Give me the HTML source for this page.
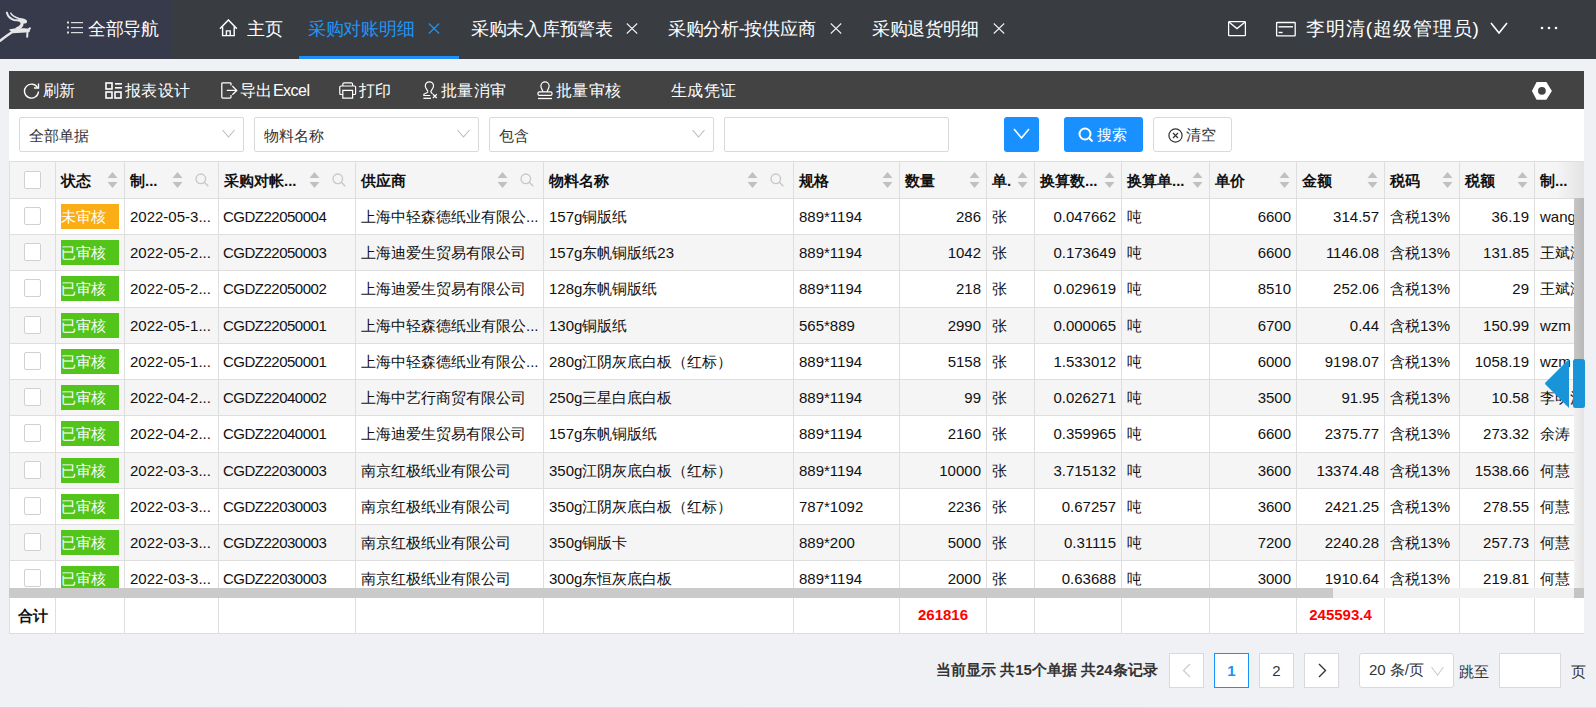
<!DOCTYPE html><html><head><meta charset="utf-8"><style>
*{box-sizing:border-box;margin:0;padding:0}
html,body{width:1596px;height:708px;overflow:hidden;background:#f0f1f5;font-family:"Liberation Sans",sans-serif;color:#111}
.abs{position:absolute}
#top{position:absolute;left:0;top:0;width:1596px;height:59px;background:#393d42}
#navl{position:absolute;left:0;top:0;width:172px;height:59px;background:#373a4b}
.tab{position:absolute;top:1px;height:59px;line-height:56px;font-size:18px;letter-spacing:-0.3px;color:#fff;white-space:nowrap}
.tbar{position:absolute;left:9px;top:71px;width:1575px;height:38px;background:#434343}
.tb{position:absolute;top:0;height:38px;line-height:39px;font-size:16px;letter-spacing:0.45px;color:#fff;white-space:nowrap}
.panel{position:absolute;left:9px;top:109px;width:1575px;height:525px;background:#fff}
.sel{position:absolute;top:117px;height:35px;border:1px solid #d9d9d9;border-radius:2px;background:#fff;font-size:15px;line-height:35px;padding-left:9px;color:#333}
.chev{position:absolute;right:8px;top:9px;width:13px;height:13px}
.btn{position:absolute;top:117px;height:35px;border-radius:3px;font-size:15px;line-height:35px;white-space:nowrap}
.cell{position:absolute;white-space:nowrap;overflow:hidden;font-size:15px;line-height:38px;padding:0 5px}
.hd{font-weight:bold;line-height:39px}
.vl{position:absolute;width:1px;background:#dedede}
.hl{position:absolute;height:1px;background:#dedede}
.badge{position:absolute;height:25px;width:58px;color:#fff;font-size:15px;line-height:25px;padding-left:0}
.cb{position:absolute;width:17px;height:18px;border:1px solid #d0d0d0;border-radius:2px;background:#fff}
.pg{position:absolute;top:653px;height:35px;border:1px solid #d9d9d9;background:#fff;font-size:15px;line-height:32px;text-align:center;color:#333}
</style></head><body>
<div id="top"></div><div id="navl"></div>
<svg class="abs" style="left:0;top:0" width="34" height="48" viewBox="0 0 34 48">
<g fill="none" stroke="#e6e6e8" stroke-linecap="round">
<path d="M6.8 12.6 C7.8 16.2 10.2 19 14 20 L19.5 20.6" stroke-width="2"/>
<path d="M10.8 13.2 C12.2 15.6 14.6 17.4 19 18.4" stroke-width="1.5"/>
<path d="M21.5 20.5 C23 24 22 27 17 28.8" stroke-width="3.2"/>
<path d="M28.5 30 L30 28.2 M27.5 31 L27.2 36.8" stroke-width="2"/>
<path d="M13 31.5 C9 34 5 37 0.5 40.5" stroke-width="2.6"/>
</g>
<ellipse cx="22.6" cy="20.8" rx="4.6" ry="2.3" fill="#e6e6e8" transform="rotate(18 22.6 20.8)"/>
<path d="M9 29.5 C13 28 22 28.2 26 28.4 C28 28.5 29.5 28.6 30 28.5 L29.6 32 C25 33.2 18 32.6 12.5 33.2 Z" fill="#e6e6e8"/>
</svg>
<svg class="abs" style="left:67px;top:21px" width="16" height="13" viewBox="0 0 16 13">
<rect x="0" y="0.5" width="2" height="2" fill="#ddd"/><rect x="0" y="5.5" width="2" height="2" fill="#ddd"/><rect x="0" y="10.5" width="2" height="2" fill="#ddd"/>
<rect x="4" y="1" width="12" height="1.2" fill="#ddd"/><rect x="4" y="6" width="12" height="1.2" fill="#ddd"/><rect x="4" y="11" width="12" height="1.2" fill="#ddd"/></svg>
<div class="tab" style="left:88px">全部导航</div>
<svg class="abs" style="left:219px;top:18px" width="19" height="19" viewBox="0 0 19 19">
<path d="M1.4 10.2 L9.4 1.9 L17.4 10.2" fill="none" stroke="#fff" stroke-width="1.5" stroke-linejoin="round" stroke-linecap="round"/><path d="M3.6 8.6 V17.6 H15.2 V8.6 M7.4 17.6 V12.9 H11.2 V17.6" fill="none" stroke="#fff" stroke-width="1.4"/></svg>
<div class="tab" style="left:247px">主页</div>
<div class="tab" style="left:308px;color:#2196f3">采购对账明细</div>
<svg class="abs" style="left:428px;top:23px" width="12" height="11" viewBox="0 0 12 11"><path d="M0.8 0.5 L11.2 10.5 M11.2 0.5 L0.8 10.5" stroke="#2196f3" stroke-width="1.1"/></svg>
<div class="abs" style="left:299px;top:56px;width:160px;height:3px;background:#1e8ffa"></div>
<div class="tab" style="left:471px">采购未入库预警表</div>
<svg class="abs" style="left:626px;top:23px" width="12" height="11" viewBox="0 0 12 11"><path d="M0.8 0.5 L11.2 10.5 M11.2 0.5 L0.8 10.5" stroke="#f0f0f0" stroke-width="1.05"/></svg>
<div class="tab" style="left:668px">采购分析-按供应商</div>
<svg class="abs" style="left:830px;top:23px" width="12" height="11" viewBox="0 0 12 11"><path d="M0.8 0.5 L11.2 10.5 M11.2 0.5 L0.8 10.5" stroke="#f0f0f0" stroke-width="1.05"/></svg>
<div class="tab" style="left:872px">采购退货明细</div>
<svg class="abs" style="left:993px;top:23px" width="12" height="11" viewBox="0 0 12 11"><path d="M0.8 0.5 L11.2 10.5 M11.2 0.5 L0.8 10.5" stroke="#f0f0f0" stroke-width="1.05"/></svg>
<svg class="abs" style="left:1227px;top:20px" width="20" height="17" viewBox="0 0 20 17">
<rect x="1.6" y="1.6" width="16.8" height="14" rx="0.6" fill="none" stroke="#fff" stroke-width="1.25"/><path d="M2.2 2.2 L10 8.6 L17.8 2.2" fill="none" stroke="#fff" stroke-width="1.25"/></svg>
<svg class="abs" style="left:1275px;top:21px" width="22" height="16" viewBox="0 0 22 16">
<rect x="1.6" y="1.5" width="18.6" height="13.4" rx="0.6" fill="none" stroke="#fff" stroke-width="1.3"/><rect x="3.6" y="5.1" width="14.4" height="1.4" fill="#fff"/><rect x="3.6" y="10.8" width="4" height="1.4" fill="#fff"/></svg>
<div class="tab" style="left:1306px;font-size:19px;letter-spacing:0.9px">李明清(超级管理员)</div>
<svg class="abs" style="left:1490px;top:22px" width="18" height="12" viewBox="0 0 18 12">
<path d="M1 1 L9 11 L17 1" fill="none" stroke="#fff" stroke-width="1.6"/></svg>
<svg class="abs" style="left:1540px;top:26px" width="18" height="4" viewBox="0 0 18 4">
<circle cx="2" cy="2" r="1.3" fill="#fff"/><circle cx="9" cy="2" r="1.3" fill="#fff"/><circle cx="16" cy="2" r="1.3" fill="#fff"/></svg>
<div class="tbar">
<svg class="abs" style="left:14px;top:11px" width="17" height="17" viewBox="0 0 17 17">
<path d="M14.5 5.5 A7 7 0 1 0 15.5 9.5" fill="none" stroke="#fff" stroke-width="1.4"/><path d="M15.5 1.5 V6 H11" fill="none" stroke="#fff" stroke-width="1.4"/></svg>
<div class="tb" style="left:34px">刷新</div>
<svg class="abs" style="left:96px;top:11px" width="17" height="17" viewBox="0 0 17 17">
<rect x="1" y="1" width="6" height="6" fill="none" stroke="#fff" stroke-width="1.6"/><rect x="1" y="10" width="6" height="6" fill="none" stroke="#fff" stroke-width="1.6"/><rect x="10" y="10" width="6" height="6" fill="none" stroke="#fff" stroke-width="1.6"/><rect x="10" y="1" width="7" height="1.6" fill="#fff"/><rect x="10" y="5" width="7" height="1.6" fill="#fff"/></svg>
<div class="tb" style="left:116px">报表设计</div>
<svg class="abs" style="left:212px;top:11px" width="17" height="17" viewBox="0 0 17 17">
<path d="M10 3.6 V1.8 Q10 0.8 9 0.8 H1.8 Q0.8 0.8 0.8 1.8 V15 Q0.8 16 1.8 16 H9 Q10 16 10 15 V13" fill="none" stroke="#fff" stroke-width="1.25"/><path d="M5.8 8.4 H15.6 M11.3 4 L15.8 8.4 L11.3 12.8" fill="none" stroke="#fff" stroke-width="1.25"/></svg>
<div class="tb" style="left:231px">导出<span style="letter-spacing:-0.5px">Excel</span></div>
<svg class="abs" style="left:330px;top:11px" width="18" height="17" viewBox="0 0 18 17">
<path d="M3.8 4 V2.2 Q3.8 0.8 5.2 0.8 H12.2 Q13.6 0.8 13.6 2.2 V4" fill="none" stroke="#fff" stroke-width="1.2"/><path d="M3.8 12.5 H1.8 Q0.8 12.5 0.8 11.5 V5 Q0.8 4 1.8 4 H15.6 Q16.6 4 16.6 5 V11.5 Q16.6 12.5 15.6 12.5 H13.6" fill="none" stroke="#fff" stroke-width="1.2"/><path d="M3.8 8.4 H13.6 V16.2 H3.8 Z" fill="none" stroke="#fff" stroke-width="1.2"/></svg>
<div class="tb" style="left:350px">打印</div>
<svg class="abs" style="left:407px;top:5px" width="30" height="28" viewBox="0 0 30 28">
<g fill="none" stroke="#fff" stroke-width="1.2">
<path d="M11.9 15.6 C11.6 13.6 9.3 12.6 9.3 9.9 A4.1 4.1 0 0 1 17.5 9.9 C17.5 12.6 15.2 13.6 14.9 15.6 C15.1 16.6 15.8 17.4 16.6 17.8"/>
<path d="M11.9 15.6 C11.4 17.3 9 17.4 7.9 18.2 V19.5 H14.2"/>
<path d="M7.4 22.3 H15" stroke-width="1.3"/>
<path d="M16.9 18.3 L20.8 22 M20.8 18.3 L16.9 22"/>
</g></svg>
<div class="tb" style="left:432px">批量消审</div>
<svg class="abs" style="left:522px;top:5px" width="30" height="28" viewBox="0 0 30 28">
<g fill="none" stroke="#fff" stroke-width="1.2">
<path d="M11.8 15.8 C11.8 14 9.9 12.5 9.9 10 A4.1 4.1 0 0 1 18.1 10 C18.1 12.5 16.2 14 16.2 15.8"/>
<rect x="7" y="15.8" width="14" height="3.6" rx="1.3"/>
<path d="M7 22.5 H21" stroke-width="1.3"/>
</g></svg>
<div class="tb" style="left:547px">批量审核</div>
<div class="tb" style="left:662px">生成凭证</div>
<svg class="abs" style="left:1522px;top:10px" width="22" height="20" viewBox="0 0 22 20">
<path d="M5.6 1 H15.4 L20.9 9.9 L15.4 18.8 H5.6 L0.9 9.9 Z" fill="#fff"/><circle cx="10.9" cy="9.8" r="3.9" fill="#434343"/></svg>
</div>
<div class="panel"></div>
<div class="sel" style="left:19px;width:225px">全部单据<svg class="chev" viewBox="0 0 13 13"><path d="M0.5 3 L6.5 10 L12.5 3" fill="none" stroke="#bbb" stroke-width="1.1"/></svg></div>
<div class="sel" style="left:254px;width:225px">物料名称<svg class="chev" viewBox="0 0 13 13"><path d="M0.5 3 L6.5 10 L12.5 3" fill="none" stroke="#bbb" stroke-width="1.1"/></svg></div>
<div class="sel" style="left:489px;width:225px">包含<svg class="chev" viewBox="0 0 13 13"><path d="M0.5 3 L6.5 10 L12.5 3" fill="none" stroke="#bbb" stroke-width="1.1"/></svg></div>
<div class="sel" style="left:724px;width:225px"></div>
<div class="btn" style="left:1004px;width:35px;background:#1890ff"><svg class="abs" style="left:9px;top:11px" width="17" height="12" viewBox="0 0 17 12"><path d="M1 1 L8.5 10 L16 1" fill="none" stroke="#fff" stroke-width="1.6"/></svg></div>
<div class="btn" style="left:1064px;width:79px;background:#1890ff;color:#fff"><svg class="abs" style="left:14px;top:10px" width="16" height="16" viewBox="0 0 16 16"><circle cx="7" cy="7" r="5.5" fill="none" stroke="#fff" stroke-width="2"/><path d="M11 11 L14.5 14.5" stroke="#fff" stroke-width="2"/></svg><span class="abs" style="left:33px">搜索</span></div>
<div class="btn" style="left:1153px;width:79px;background:#fff;border:1px solid #d9d9d9;color:#333;line-height:33px"><svg class="abs" style="left:14px;top:10px" width="15" height="15" viewBox="0 0 15 15"><circle cx="7.5" cy="7.5" r="6.6" fill="none" stroke="#333" stroke-width="1.2"/><path d="M5 5 L10 10 M10 5 L5 10" stroke="#333" stroke-width="1.2"/></svg><span class="abs" style="left:32px">清空</span></div>
<div class="abs" style="left:9px;top:161px;width:1575px;height:37px;background:#f5f5f5"></div>
<div class="abs" style="left:9px;top:198px;width:1565px;height:36px;background:#fff"></div>
<div class="abs" style="left:9px;top:234px;width:1565px;height:36px;background:#f5f5f5"></div>
<div class="abs" style="left:9px;top:270px;width:1565px;height:37px;background:#fff"></div>
<div class="abs" style="left:9px;top:307px;width:1565px;height:36px;background:#f5f5f5"></div>
<div class="abs" style="left:9px;top:343px;width:1565px;height:36px;background:#fff"></div>
<div class="abs" style="left:9px;top:379px;width:1565px;height:36px;background:#f5f5f5"></div>
<div class="abs" style="left:9px;top:415px;width:1565px;height:37px;background:#fff"></div>
<div class="abs" style="left:9px;top:452px;width:1565px;height:36px;background:#f5f5f5"></div>
<div class="abs" style="left:9px;top:488px;width:1565px;height:36px;background:#fff"></div>
<div class="abs" style="left:9px;top:524px;width:1565px;height:36px;background:#f5f5f5"></div>
<div class="abs" style="left:9px;top:560px;width:1565px;height:28px;background:#fff"></div>
<div class="abs" style="left:0;top:198px;width:1574px;height:390px;overflow:hidden">
<div class="cb" style="left:24px;top:9px"></div>
<div class="badge" style="left:61px;top:6px;background:#faad14">未审核</div>
<div class="cell" style="left:125px;top:0.00px;width:93px;">2022-05-3...</div>
<div class="cell" style="left:219px;top:0.00px;width:136px;letter-spacing:-0.5px;padding-left:4px;">CGDZ22050004</div>
<div class="cell" style="left:356px;top:0.00px;width:187px;">上海中轻森德纸业有限公...</div>
<div class="cell" style="left:544px;top:0.00px;width:249px;">157g铜版纸</div>
<div class="cell" style="left:794px;top:0.00px;width:105px;">889*1194</div>
<div class="cell" style="left:900px;top:0.00px;width:86px;text-align:right;">286</div>
<div class="cell" style="left:987px;top:0.00px;width:47px;">张</div>
<div class="cell" style="left:1035px;top:0.00px;width:86px;text-align:right;">0.047662</div>
<div class="cell" style="left:1122px;top:0.00px;width:87px;">吨</div>
<div class="cell" style="left:1210px;top:0.00px;width:86px;text-align:right;">6600</div>
<div class="cell" style="left:1297px;top:0.00px;width:87px;text-align:right;">314.57</div>
<div class="cell" style="left:1385px;top:0.00px;width:74px;">含税13%</div>
<div class="cell" style="left:1460px;top:0.00px;width:74px;text-align:right;">36.19</div>
<div class="cell" style="left:1535px;top:0.00px;width:165px;">wang</div>
<div class="cb" style="left:24px;top:45px"></div>
<div class="badge" style="left:61px;top:42px;background:#52c41a">已审核</div>
<div class="cell" style="left:125px;top:36.00px;width:93px;">2022-05-2...</div>
<div class="cell" style="left:219px;top:36.00px;width:136px;letter-spacing:-0.5px;padding-left:4px;">CGDZ22050003</div>
<div class="cell" style="left:356px;top:36.00px;width:187px;">上海迪爱生贸易有限公司</div>
<div class="cell" style="left:544px;top:36.00px;width:249px;">157g东帆铜版纸23</div>
<div class="cell" style="left:794px;top:36.00px;width:105px;">889*1194</div>
<div class="cell" style="left:900px;top:36.00px;width:86px;text-align:right;">1042</div>
<div class="cell" style="left:987px;top:36.00px;width:47px;">张</div>
<div class="cell" style="left:1035px;top:36.00px;width:86px;text-align:right;">0.173649</div>
<div class="cell" style="left:1122px;top:36.00px;width:87px;">吨</div>
<div class="cell" style="left:1210px;top:36.00px;width:86px;text-align:right;">6600</div>
<div class="cell" style="left:1297px;top:36.00px;width:87px;text-align:right;">1146.08</div>
<div class="cell" style="left:1385px;top:36.00px;width:74px;">含税13%</div>
<div class="cell" style="left:1460px;top:36.00px;width:74px;text-align:right;">131.85</div>
<div class="cell" style="left:1535px;top:36.00px;width:165px;">王斌涛</div>
<div class="cb" style="left:24px;top:81px"></div>
<div class="badge" style="left:61px;top:78px;background:#52c41a">已审核</div>
<div class="cell" style="left:125px;top:72.00px;width:93px;">2022-05-2...</div>
<div class="cell" style="left:219px;top:72.00px;width:136px;letter-spacing:-0.5px;padding-left:4px;">CGDZ22050002</div>
<div class="cell" style="left:356px;top:72.00px;width:187px;">上海迪爱生贸易有限公司</div>
<div class="cell" style="left:544px;top:72.00px;width:249px;">128g东帆铜版纸</div>
<div class="cell" style="left:794px;top:72.00px;width:105px;">889*1194</div>
<div class="cell" style="left:900px;top:72.00px;width:86px;text-align:right;">218</div>
<div class="cell" style="left:987px;top:72.00px;width:47px;">张</div>
<div class="cell" style="left:1035px;top:72.00px;width:86px;text-align:right;">0.029619</div>
<div class="cell" style="left:1122px;top:72.00px;width:87px;">吨</div>
<div class="cell" style="left:1210px;top:72.00px;width:86px;text-align:right;">8510</div>
<div class="cell" style="left:1297px;top:72.00px;width:87px;text-align:right;">252.06</div>
<div class="cell" style="left:1385px;top:72.00px;width:74px;">含税13%</div>
<div class="cell" style="left:1460px;top:72.00px;width:74px;text-align:right;">29</div>
<div class="cell" style="left:1535px;top:72.00px;width:165px;">王斌涛</div>
<div class="cb" style="left:24px;top:118px"></div>
<div class="badge" style="left:61px;top:115px;background:#52c41a">已审核</div>
<div class="cell" style="left:125px;top:109.00px;width:93px;">2022-05-1...</div>
<div class="cell" style="left:219px;top:109.00px;width:136px;letter-spacing:-0.5px;padding-left:4px;">CGDZ22050001</div>
<div class="cell" style="left:356px;top:109.00px;width:187px;">上海中轻森德纸业有限公...</div>
<div class="cell" style="left:544px;top:109.00px;width:249px;">130g铜版纸</div>
<div class="cell" style="left:794px;top:109.00px;width:105px;">565*889</div>
<div class="cell" style="left:900px;top:109.00px;width:86px;text-align:right;">2990</div>
<div class="cell" style="left:987px;top:109.00px;width:47px;">张</div>
<div class="cell" style="left:1035px;top:109.00px;width:86px;text-align:right;">0.000065</div>
<div class="cell" style="left:1122px;top:109.00px;width:87px;">吨</div>
<div class="cell" style="left:1210px;top:109.00px;width:86px;text-align:right;">6700</div>
<div class="cell" style="left:1297px;top:109.00px;width:87px;text-align:right;">0.44</div>
<div class="cell" style="left:1385px;top:109.00px;width:74px;">含税13%</div>
<div class="cell" style="left:1460px;top:109.00px;width:74px;text-align:right;">150.99</div>
<div class="cell" style="left:1535px;top:109.00px;width:165px;">wzm</div>
<div class="cb" style="left:24px;top:154px"></div>
<div class="badge" style="left:61px;top:151px;background:#52c41a">已审核</div>
<div class="cell" style="left:125px;top:145.00px;width:93px;">2022-05-1...</div>
<div class="cell" style="left:219px;top:145.00px;width:136px;letter-spacing:-0.5px;padding-left:4px;">CGDZ22050001</div>
<div class="cell" style="left:356px;top:145.00px;width:187px;">上海中轻森德纸业有限公...</div>
<div class="cell" style="left:544px;top:145.00px;width:249px;">280g江阴灰底白板（红标）</div>
<div class="cell" style="left:794px;top:145.00px;width:105px;">889*1194</div>
<div class="cell" style="left:900px;top:145.00px;width:86px;text-align:right;">5158</div>
<div class="cell" style="left:987px;top:145.00px;width:47px;">张</div>
<div class="cell" style="left:1035px;top:145.00px;width:86px;text-align:right;">1.533012</div>
<div class="cell" style="left:1122px;top:145.00px;width:87px;">吨</div>
<div class="cell" style="left:1210px;top:145.00px;width:86px;text-align:right;">6000</div>
<div class="cell" style="left:1297px;top:145.00px;width:87px;text-align:right;">9198.07</div>
<div class="cell" style="left:1385px;top:145.00px;width:74px;">含税13%</div>
<div class="cell" style="left:1460px;top:145.00px;width:74px;text-align:right;">1058.19</div>
<div class="cell" style="left:1535px;top:145.00px;width:165px;">wzm</div>
<div class="cb" style="left:24px;top:190px"></div>
<div class="badge" style="left:61px;top:187px;background:#52c41a">已审核</div>
<div class="cell" style="left:125px;top:181.00px;width:93px;">2022-04-2...</div>
<div class="cell" style="left:219px;top:181.00px;width:136px;letter-spacing:-0.5px;padding-left:4px;">CGDZ22040002</div>
<div class="cell" style="left:356px;top:181.00px;width:187px;">上海中艺行商贸有限公司</div>
<div class="cell" style="left:544px;top:181.00px;width:249px;">250g三星白底白板</div>
<div class="cell" style="left:794px;top:181.00px;width:105px;">889*1194</div>
<div class="cell" style="left:900px;top:181.00px;width:86px;text-align:right;">99</div>
<div class="cell" style="left:987px;top:181.00px;width:47px;">张</div>
<div class="cell" style="left:1035px;top:181.00px;width:86px;text-align:right;">0.026271</div>
<div class="cell" style="left:1122px;top:181.00px;width:87px;">吨</div>
<div class="cell" style="left:1210px;top:181.00px;width:86px;text-align:right;">3500</div>
<div class="cell" style="left:1297px;top:181.00px;width:87px;text-align:right;">91.95</div>
<div class="cell" style="left:1385px;top:181.00px;width:74px;">含税13%</div>
<div class="cell" style="left:1460px;top:181.00px;width:74px;text-align:right;">10.58</div>
<div class="cell" style="left:1535px;top:181.00px;width:165px;">李明清</div>
<div class="cb" style="left:24px;top:226px"></div>
<div class="badge" style="left:61px;top:223px;background:#52c41a">已审核</div>
<div class="cell" style="left:125px;top:217.00px;width:93px;">2022-04-2...</div>
<div class="cell" style="left:219px;top:217.00px;width:136px;letter-spacing:-0.5px;padding-left:4px;">CGDZ22040001</div>
<div class="cell" style="left:356px;top:217.00px;width:187px;">上海迪爱生贸易有限公司</div>
<div class="cell" style="left:544px;top:217.00px;width:249px;">157g东帆铜版纸</div>
<div class="cell" style="left:794px;top:217.00px;width:105px;">889*1194</div>
<div class="cell" style="left:900px;top:217.00px;width:86px;text-align:right;">2160</div>
<div class="cell" style="left:987px;top:217.00px;width:47px;">张</div>
<div class="cell" style="left:1035px;top:217.00px;width:86px;text-align:right;">0.359965</div>
<div class="cell" style="left:1122px;top:217.00px;width:87px;">吨</div>
<div class="cell" style="left:1210px;top:217.00px;width:86px;text-align:right;">6600</div>
<div class="cell" style="left:1297px;top:217.00px;width:87px;text-align:right;">2375.77</div>
<div class="cell" style="left:1385px;top:217.00px;width:74px;">含税13%</div>
<div class="cell" style="left:1460px;top:217.00px;width:74px;text-align:right;">273.32</div>
<div class="cell" style="left:1535px;top:217.00px;width:165px;">余涛</div>
<div class="cb" style="left:24px;top:263px"></div>
<div class="badge" style="left:61px;top:260px;background:#52c41a">已审核</div>
<div class="cell" style="left:125px;top:254.00px;width:93px;">2022-03-3...</div>
<div class="cell" style="left:219px;top:254.00px;width:136px;letter-spacing:-0.5px;padding-left:4px;">CGDZ22030003</div>
<div class="cell" style="left:356px;top:254.00px;width:187px;">南京红极纸业有限公司</div>
<div class="cell" style="left:544px;top:254.00px;width:249px;">350g江阴灰底白板（红标）</div>
<div class="cell" style="left:794px;top:254.00px;width:105px;">889*1194</div>
<div class="cell" style="left:900px;top:254.00px;width:86px;text-align:right;">10000</div>
<div class="cell" style="left:987px;top:254.00px;width:47px;">张</div>
<div class="cell" style="left:1035px;top:254.00px;width:86px;text-align:right;">3.715132</div>
<div class="cell" style="left:1122px;top:254.00px;width:87px;">吨</div>
<div class="cell" style="left:1210px;top:254.00px;width:86px;text-align:right;">3600</div>
<div class="cell" style="left:1297px;top:254.00px;width:87px;text-align:right;">13374.48</div>
<div class="cell" style="left:1385px;top:254.00px;width:74px;">含税13%</div>
<div class="cell" style="left:1460px;top:254.00px;width:74px;text-align:right;">1538.66</div>
<div class="cell" style="left:1535px;top:254.00px;width:165px;">何慧</div>
<div class="cb" style="left:24px;top:299px"></div>
<div class="badge" style="left:61px;top:296px;background:#52c41a">已审核</div>
<div class="cell" style="left:125px;top:290.00px;width:93px;">2022-03-3...</div>
<div class="cell" style="left:219px;top:290.00px;width:136px;letter-spacing:-0.5px;padding-left:4px;">CGDZ22030003</div>
<div class="cell" style="left:356px;top:290.00px;width:187px;">南京红极纸业有限公司</div>
<div class="cell" style="left:544px;top:290.00px;width:249px;">350g江阴灰底白板（红标）</div>
<div class="cell" style="left:794px;top:290.00px;width:105px;">787*1092</div>
<div class="cell" style="left:900px;top:290.00px;width:86px;text-align:right;">2236</div>
<div class="cell" style="left:987px;top:290.00px;width:47px;">张</div>
<div class="cell" style="left:1035px;top:290.00px;width:86px;text-align:right;">0.67257</div>
<div class="cell" style="left:1122px;top:290.00px;width:87px;">吨</div>
<div class="cell" style="left:1210px;top:290.00px;width:86px;text-align:right;">3600</div>
<div class="cell" style="left:1297px;top:290.00px;width:87px;text-align:right;">2421.25</div>
<div class="cell" style="left:1385px;top:290.00px;width:74px;">含税13%</div>
<div class="cell" style="left:1460px;top:290.00px;width:74px;text-align:right;">278.55</div>
<div class="cell" style="left:1535px;top:290.00px;width:165px;">何慧</div>
<div class="cb" style="left:24px;top:335px"></div>
<div class="badge" style="left:61px;top:332px;background:#52c41a">已审核</div>
<div class="cell" style="left:125px;top:326.00px;width:93px;">2022-03-3...</div>
<div class="cell" style="left:219px;top:326.00px;width:136px;letter-spacing:-0.5px;padding-left:4px;">CGDZ22030003</div>
<div class="cell" style="left:356px;top:326.00px;width:187px;">南京红极纸业有限公司</div>
<div class="cell" style="left:544px;top:326.00px;width:249px;">350g铜版卡</div>
<div class="cell" style="left:794px;top:326.00px;width:105px;">889*200</div>
<div class="cell" style="left:900px;top:326.00px;width:86px;text-align:right;">5000</div>
<div class="cell" style="left:987px;top:326.00px;width:47px;">张</div>
<div class="cell" style="left:1035px;top:326.00px;width:86px;text-align:right;">0.31115</div>
<div class="cell" style="left:1122px;top:326.00px;width:87px;">吨</div>
<div class="cell" style="left:1210px;top:326.00px;width:86px;text-align:right;">7200</div>
<div class="cell" style="left:1297px;top:326.00px;width:87px;text-align:right;">2240.28</div>
<div class="cell" style="left:1385px;top:326.00px;width:74px;">含税13%</div>
<div class="cell" style="left:1460px;top:326.00px;width:74px;text-align:right;">257.73</div>
<div class="cell" style="left:1535px;top:326.00px;width:165px;">何慧</div>
<div class="cb" style="left:24px;top:371px"></div>
<div class="badge" style="left:61px;top:368px;background:#52c41a">已审核</div>
<div class="cell" style="left:125px;top:362.00px;width:93px;">2022-03-3...</div>
<div class="cell" style="left:219px;top:362.00px;width:136px;letter-spacing:-0.5px;padding-left:4px;">CGDZ22030003</div>
<div class="cell" style="left:356px;top:362.00px;width:187px;">南京红极纸业有限公司</div>
<div class="cell" style="left:544px;top:362.00px;width:249px;">300g东恒灰底白板</div>
<div class="cell" style="left:794px;top:362.00px;width:105px;">889*1194</div>
<div class="cell" style="left:900px;top:362.00px;width:86px;text-align:right;">2000</div>
<div class="cell" style="left:987px;top:362.00px;width:47px;">张</div>
<div class="cell" style="left:1035px;top:362.00px;width:86px;text-align:right;">0.63688</div>
<div class="cell" style="left:1122px;top:362.00px;width:87px;">吨</div>
<div class="cell" style="left:1210px;top:362.00px;width:86px;text-align:right;">3000</div>
<div class="cell" style="left:1297px;top:362.00px;width:87px;text-align:right;">1910.64</div>
<div class="cell" style="left:1385px;top:362.00px;width:74px;">含税13%</div>
<div class="cell" style="left:1460px;top:362.00px;width:74px;text-align:right;">219.81</div>
<div class="cell" style="left:1535px;top:362.00px;width:165px;">何慧</div>
<div class="hl" style="left:9px;top:36.00px;width:1565px"></div>
<div class="hl" style="left:9px;top:72.00px;width:1565px"></div>
<div class="hl" style="left:9px;top:109.00px;width:1565px"></div>
<div class="hl" style="left:9px;top:145.00px;width:1565px"></div>
<div class="hl" style="left:9px;top:181.00px;width:1565px"></div>
<div class="hl" style="left:9px;top:217.00px;width:1565px"></div>
<div class="hl" style="left:9px;top:254.00px;width:1565px"></div>
<div class="hl" style="left:9px;top:290.00px;width:1565px"></div>
<div class="hl" style="left:9px;top:326.00px;width:1565px"></div>
<div class="hl" style="left:9px;top:362.00px;width:1565px"></div>
<div class="hl" style="left:9px;top:398.00px;width:1565px"></div>
</div>
<div class="vl" style="left:9px;top:161px;height:427px"></div>
<div class="vl" style="left:9px;top:598px;height:36px"></div>
<div class="vl" style="left:55px;top:161px;height:427px"></div>
<div class="vl" style="left:55px;top:598px;height:36px"></div>
<div class="vl" style="left:124px;top:161px;height:427px"></div>
<div class="vl" style="left:124px;top:598px;height:36px"></div>
<div class="vl" style="left:218px;top:161px;height:427px"></div>
<div class="vl" style="left:218px;top:598px;height:36px"></div>
<div class="vl" style="left:355px;top:161px;height:427px"></div>
<div class="vl" style="left:355px;top:598px;height:36px"></div>
<div class="vl" style="left:543px;top:161px;height:427px"></div>
<div class="vl" style="left:543px;top:598px;height:36px"></div>
<div class="vl" style="left:793px;top:161px;height:427px"></div>
<div class="vl" style="left:793px;top:598px;height:36px"></div>
<div class="vl" style="left:899px;top:161px;height:427px"></div>
<div class="vl" style="left:899px;top:598px;height:36px"></div>
<div class="vl" style="left:986px;top:161px;height:427px"></div>
<div class="vl" style="left:986px;top:598px;height:36px"></div>
<div class="vl" style="left:1034px;top:161px;height:427px"></div>
<div class="vl" style="left:1034px;top:598px;height:36px"></div>
<div class="vl" style="left:1121px;top:161px;height:427px"></div>
<div class="vl" style="left:1121px;top:598px;height:36px"></div>
<div class="vl" style="left:1209px;top:161px;height:427px"></div>
<div class="vl" style="left:1209px;top:598px;height:36px"></div>
<div class="vl" style="left:1296px;top:161px;height:427px"></div>
<div class="vl" style="left:1296px;top:598px;height:36px"></div>
<div class="vl" style="left:1384px;top:161px;height:427px"></div>
<div class="vl" style="left:1384px;top:598px;height:36px"></div>
<div class="vl" style="left:1459px;top:161px;height:427px"></div>
<div class="vl" style="left:1459px;top:598px;height:36px"></div>
<div class="vl" style="left:1534px;top:161px;height:427px"></div>
<div class="vl" style="left:1534px;top:598px;height:36px"></div>
<div class="hl" style="left:9px;top:161px;width:1575px"></div>
<div class="hl" style="left:9px;top:198px;width:1565px"></div>
<div class="cb" style="left:24px;top:171px"></div>
<div class="cell hd" style="left:56px;top:161px;width:68px">状态</div>
<svg class="abs" style="left:107px;top:172px" width="11" height="17" viewBox="0 0 11 17"><path d="M5.5 0 L10.5 6 H0.5 Z M0.5 10 H10.5 L5.5 16 Z" fill="#c0c0c0"/></svg>
<div class="cell hd" style="left:125px;top:161px;width:93px">制...</div>
<svg class="abs" style="left:172px;top:172px" width="11" height="17" viewBox="0 0 11 17"><path d="M5.5 0 L10.5 6 H0.5 Z M0.5 10 H10.5 L5.5 16 Z" fill="#c0c0c0"/></svg>
<svg class="abs" style="left:195px;top:173px" width="14" height="14" viewBox="0 0 14 14"><circle cx="5.8" cy="5.8" r="4.8" fill="none" stroke="#c8c8c8" stroke-width="1.3"/><path d="M9.3 9.3 L13.3 13.3" stroke="#c8c8c8" stroke-width="1.4"/></svg>
<div class="cell hd" style="left:219px;top:161px;width:136px">采购对帐...</div>
<svg class="abs" style="left:309px;top:172px" width="11" height="17" viewBox="0 0 11 17"><path d="M5.5 0 L10.5 6 H0.5 Z M0.5 10 H10.5 L5.5 16 Z" fill="#c0c0c0"/></svg>
<svg class="abs" style="left:332px;top:173px" width="14" height="14" viewBox="0 0 14 14"><circle cx="5.8" cy="5.8" r="4.8" fill="none" stroke="#c8c8c8" stroke-width="1.3"/><path d="M9.3 9.3 L13.3 13.3" stroke="#c8c8c8" stroke-width="1.4"/></svg>
<div class="cell hd" style="left:356px;top:161px;width:187px">供应商</div>
<svg class="abs" style="left:497px;top:172px" width="11" height="17" viewBox="0 0 11 17"><path d="M5.5 0 L10.5 6 H0.5 Z M0.5 10 H10.5 L5.5 16 Z" fill="#c0c0c0"/></svg>
<svg class="abs" style="left:520px;top:173px" width="14" height="14" viewBox="0 0 14 14"><circle cx="5.8" cy="5.8" r="4.8" fill="none" stroke="#c8c8c8" stroke-width="1.3"/><path d="M9.3 9.3 L13.3 13.3" stroke="#c8c8c8" stroke-width="1.4"/></svg>
<div class="cell hd" style="left:544px;top:161px;width:249px">物料名称</div>
<svg class="abs" style="left:747px;top:172px" width="11" height="17" viewBox="0 0 11 17"><path d="M5.5 0 L10.5 6 H0.5 Z M0.5 10 H10.5 L5.5 16 Z" fill="#c0c0c0"/></svg>
<svg class="abs" style="left:770px;top:173px" width="14" height="14" viewBox="0 0 14 14"><circle cx="5.8" cy="5.8" r="4.8" fill="none" stroke="#c8c8c8" stroke-width="1.3"/><path d="M9.3 9.3 L13.3 13.3" stroke="#c8c8c8" stroke-width="1.4"/></svg>
<div class="cell hd" style="left:794px;top:161px;width:105px">规格</div>
<svg class="abs" style="left:882px;top:172px" width="11" height="17" viewBox="0 0 11 17"><path d="M5.5 0 L10.5 6 H0.5 Z M0.5 10 H10.5 L5.5 16 Z" fill="#c0c0c0"/></svg>
<div class="cell hd" style="left:900px;top:161px;width:86px">数量</div>
<svg class="abs" style="left:969px;top:172px" width="11" height="17" viewBox="0 0 11 17"><path d="M5.5 0 L10.5 6 H0.5 Z M0.5 10 H10.5 L5.5 16 Z" fill="#c0c0c0"/></svg>
<div class="cell hd" style="left:987px;top:161px;width:47px">单.</div>
<svg class="abs" style="left:1017px;top:172px" width="11" height="17" viewBox="0 0 11 17"><path d="M5.5 0 L10.5 6 H0.5 Z M0.5 10 H10.5 L5.5 16 Z" fill="#c0c0c0"/></svg>
<div class="cell hd" style="left:1035px;top:161px;width:86px">换算数...</div>
<svg class="abs" style="left:1104px;top:172px" width="11" height="17" viewBox="0 0 11 17"><path d="M5.5 0 L10.5 6 H0.5 Z M0.5 10 H10.5 L5.5 16 Z" fill="#c0c0c0"/></svg>
<div class="cell hd" style="left:1122px;top:161px;width:87px">换算单...</div>
<svg class="abs" style="left:1192px;top:172px" width="11" height="17" viewBox="0 0 11 17"><path d="M5.5 0 L10.5 6 H0.5 Z M0.5 10 H10.5 L5.5 16 Z" fill="#c0c0c0"/></svg>
<div class="cell hd" style="left:1210px;top:161px;width:86px">单价</div>
<svg class="abs" style="left:1279px;top:172px" width="11" height="17" viewBox="0 0 11 17"><path d="M5.5 0 L10.5 6 H0.5 Z M0.5 10 H10.5 L5.5 16 Z" fill="#c0c0c0"/></svg>
<div class="cell hd" style="left:1297px;top:161px;width:87px">金额</div>
<svg class="abs" style="left:1367px;top:172px" width="11" height="17" viewBox="0 0 11 17"><path d="M5.5 0 L10.5 6 H0.5 Z M0.5 10 H10.5 L5.5 16 Z" fill="#c0c0c0"/></svg>
<div class="cell hd" style="left:1385px;top:161px;width:74px">税码</div>
<svg class="abs" style="left:1442px;top:172px" width="11" height="17" viewBox="0 0 11 17"><path d="M5.5 0 L10.5 6 H0.5 Z M0.5 10 H10.5 L5.5 16 Z" fill="#c0c0c0"/></svg>
<div class="cell hd" style="left:1460px;top:161px;width:74px">税额</div>
<svg class="abs" style="left:1517px;top:172px" width="11" height="17" viewBox="0 0 11 17"><path d="M5.5 0 L10.5 6 H0.5 Z M0.5 10 H10.5 L5.5 16 Z" fill="#c0c0c0"/></svg>
<div class="cell hd" style="left:1535px;top:161px;width:39px">制...</div>
<div class="abs" style="left:1556px;top:162px;width:28px;height:36px;background:linear-gradient(90deg,rgba(0,0,0,0),rgba(0,0,0,0.07))"></div>
<div class="abs" style="left:1574px;top:198px;width:10px;height:399px;background:linear-gradient(90deg,#f1f1f1,#e4e4e4)"></div>
<div class="abs" style="left:1574px;top:198px;width:10px;height:208px;background:linear-gradient(90deg,#c6c6c6,#b8b8b8)"></div>
<div class="abs" style="left:9px;top:588px;width:1565px;height:10px;background:#f1f1f1"></div>
<div class="abs" style="left:9px;top:588px;width:1324px;height:10px;background:#cacaca"></div>
<div class="abs" style="left:1574px;top:588px;width:10px;height:10px;background:#c4c4c4"></div>
<div class="hl" style="left:9px;top:633px;width:1575px"></div>
<div class="cell hd" style="left:10px;top:598px;width:45px;line-height:36px;text-align:center;padding:0">合计</div>
<div class="cell hd" style="left:900px;top:597px;width:86px;line-height:36px;color:#f00;text-align:center">261816</div>
<div class="cell hd" style="left:1297px;top:597px;width:87px;line-height:36px;color:#f00;text-align:center">245593.4</div>
<svg class="abs" style="left:1544px;top:358px" width="42" height="51" viewBox="0 0 42 51">
<path d="M25 1 L1.5 24.5 Q0.5 25.5 1.5 26.5 L25 50 Z" fill="#1a94d8"/><rect x="29" y="1" width="12" height="49" rx="2.5" fill="#1a94d8"/></svg>
<div class="abs" style="left:936px;top:653px;height:34px;line-height:34px;font-size:15px;font-weight:bold;color:#333;white-space:nowrap">当前显示 共15个单据 共24条记录</div>
<div class="pg" style="left:1169px;width:35px"><svg class="abs" style="left:11px;top:9px" width="12" height="15" viewBox="0 0 12 15"><path d="M9 1 L2.5 7.5 L9 14" fill="none" stroke="#ccc" stroke-width="1.3"/></svg></div>
<div class="pg" style="left:1214px;width:35px;border-color:#1890ff;color:#1890ff;font-weight:bold;line-height:34px">1</div>
<div class="pg" style="left:1259px;width:35px;line-height:34px">2</div>
<div class="pg" style="left:1304px;width:35px"><svg class="abs" style="left:11px;top:9px" width="12" height="15" viewBox="0 0 12 15"><path d="M3 1 L9.5 7.5 L3 14" fill="none" stroke="#333" stroke-width="1.4"/></svg></div>
<div class="pg" style="left:1359px;width:95px;text-align:left;padding-left:9px;border-radius:3px">20 条/页<svg class="abs" style="left:71px;top:11px" width="13" height="12" viewBox="0 0 13 12"><path d="M0.5 2 L6.5 10 L12.5 2" fill="none" stroke="#ccc" stroke-width="1.1"/></svg></div>
<div class="abs" style="left:1459px;top:654px;line-height:35px;font-size:15px;color:#333">跳至</div>
<div class="pg" style="left:1499px;width:62px"></div>
<div class="abs" style="left:1571px;top:654px;line-height:35px;font-size:15px;color:#333">页</div>
<div class="abs" style="left:0;top:707px;width:1596px;height:1px;background:linear-gradient(90deg,#e4d4c6,#f0dfd3)"></div>
</body></html>
